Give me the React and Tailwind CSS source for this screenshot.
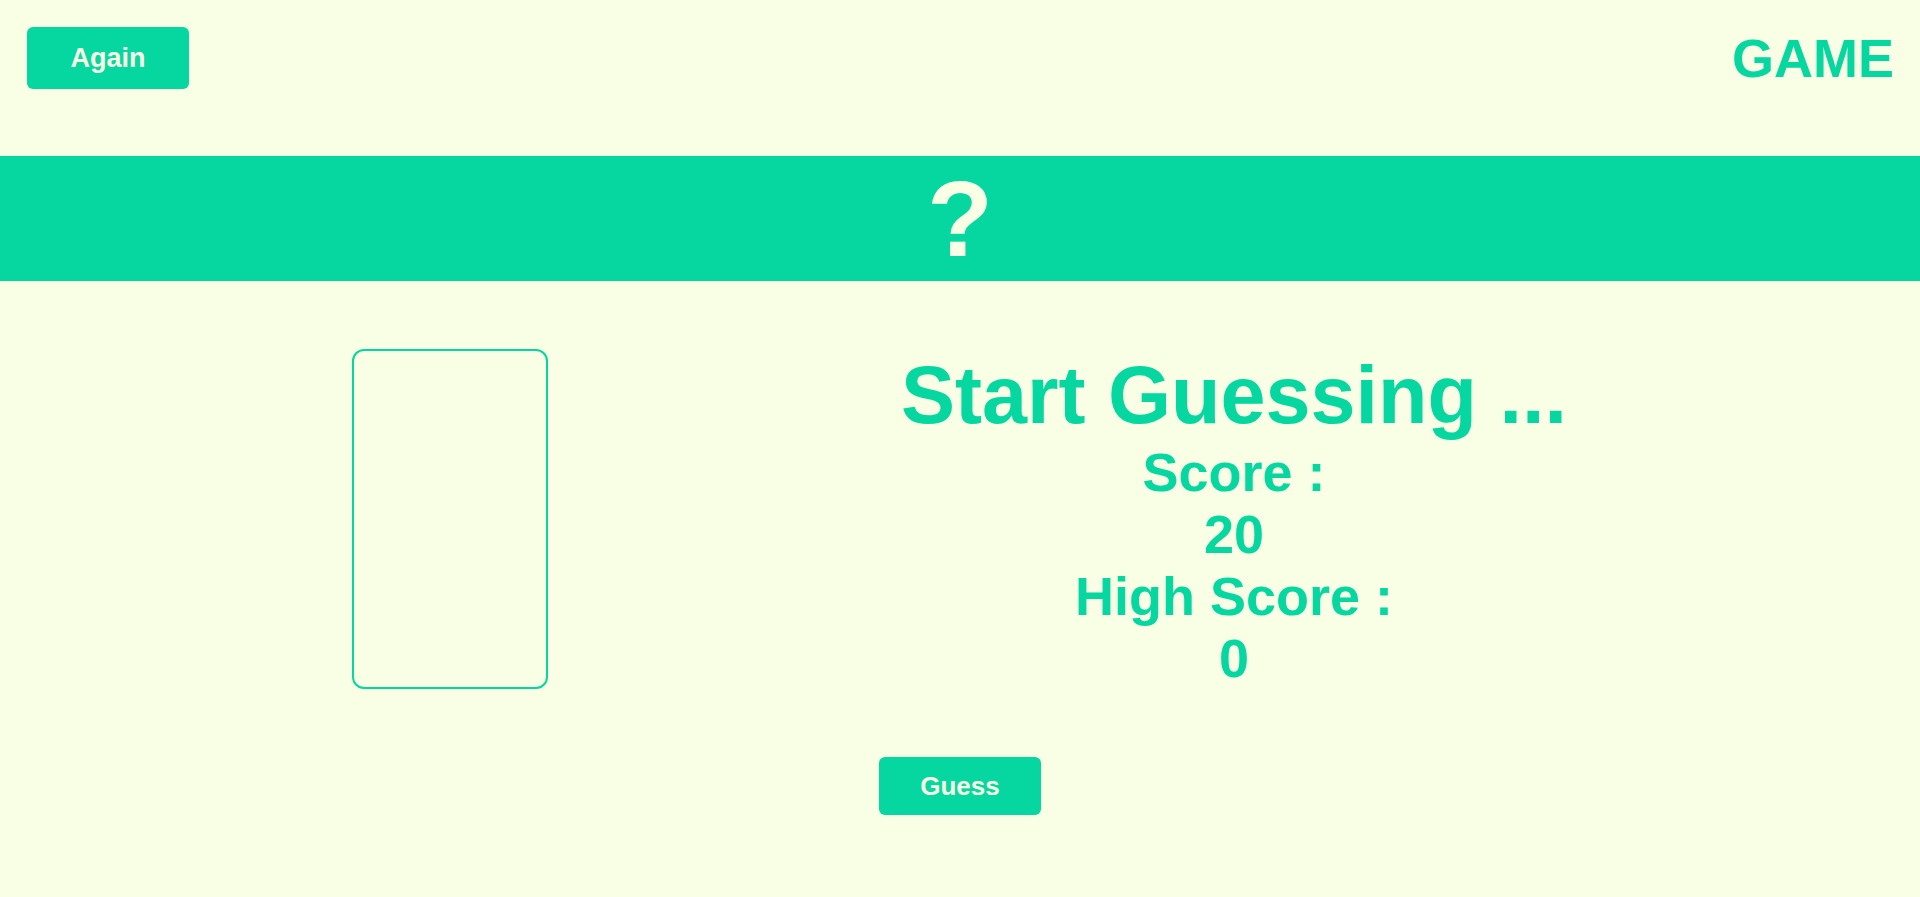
import React from 'react';

const GREEN = 'bg-[#06d6a0]';

export default function App() {
  return (
    <div className="w-full min-h-screen bg-[#f8ffe5] font-['Liberation_Sans',Arial,sans-serif] font-bold text-[#06d6a0] overflow-hidden">
      <header className="flex items-center justify-between pl-[27px] pr-[26px] pt-[27px] pb-[67px]">
        <button className={`${GREEN} w-[162px] h-[62px] rounded-md text-[#f8ffe5] text-[27px] leading-none flex items-center justify-center`}>
          Again
        </button>
        <h2 className="text-[54px] leading-none">GAME</h2>
      </header>

      <div className={`${GREEN} h-[125px] flex items-center justify-center`}>
        <span className="text-[108px] leading-none text-[#f8ffe5]">?</span>
      </div>

      <main className="flex items-start pl-[352px] pt-[68px]">
        <div className="w-[196px] h-[340px] border-2 border-[#06d6a0] rounded-xl shrink-0"></div>
        <div className="flex-1 flex flex-col items-center">
          <h1 className="text-[81px] leading-[92px] whitespace-nowrap">Start Guessing ...</h1>
          <div className="flex flex-col items-center text-[54px] leading-[62px] whitespace-nowrap">
            <p>Score :</p>
            <p>20</p>
            <p>High Score :</p>
            <p>0</p>
          </div>
        </div>
      </main>

      <div className="flex justify-center pt-[68px]">
        <button className={`${GREEN} w-[162px] h-[58px] rounded-md text-[#f8ffe5] text-[26px] leading-none flex items-center justify-center`}>
          Guess
        </button>
      </div>
    </div>
  );
}
